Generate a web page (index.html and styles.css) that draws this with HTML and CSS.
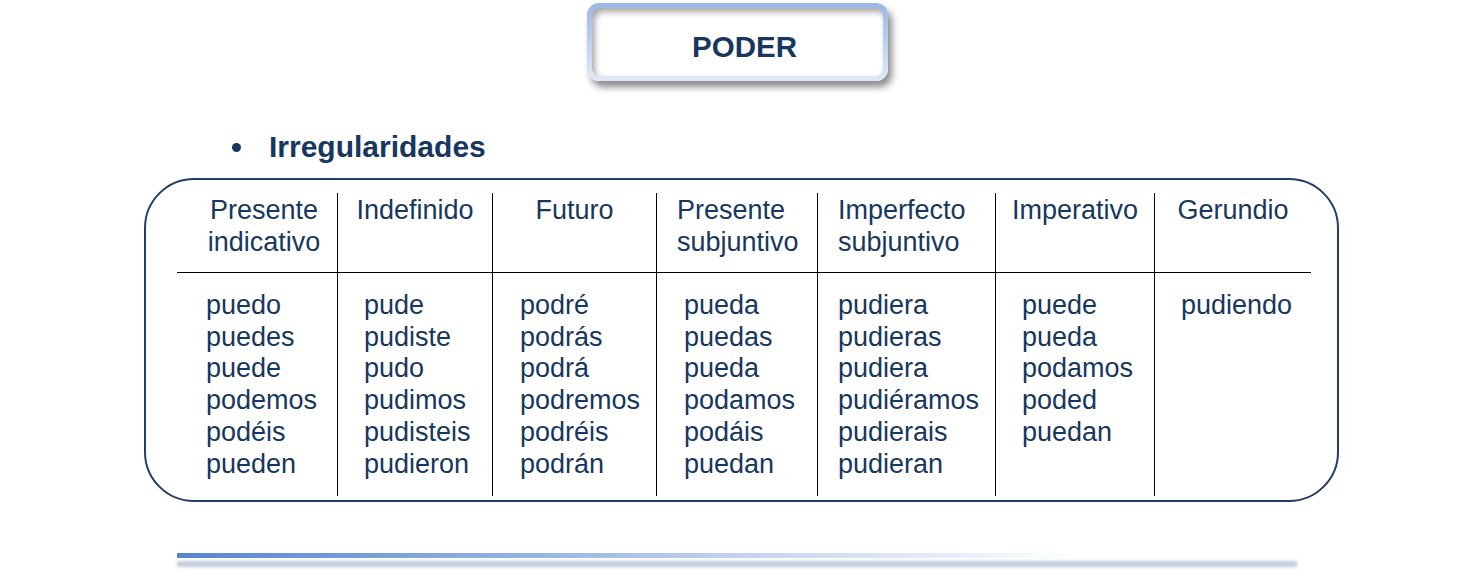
FILE: index.html
```html
<!DOCTYPE html>
<html lang="es">
<head>
<meta charset="utf-8">
<title>PODER</title>
<link rel="stylesheet" href="styles.css">
</head>
<body>
<div class="title-wrap">
  <div class="title-box">
    <div class="title-inner">PODER</div>
  </div>
</div>

<div class="heading">
  <span class="bullet"></span>
  <span class="heading-text">Irregularidades</span>
</div>

<div class="frame">
  <div class="table">
    <div class="col c1">
      <div class="head">Presente<br>indicativo</div>
      <div class="body">puedo<br>puedes<br>puede<br>podemos<br>podéis<br>pueden</div>
    </div>
    <div class="col c2">
      <div class="head">Indefinido</div>
      <div class="body">pude<br>pudiste<br>pudo<br>pudimos<br>pudisteis<br>pudieron</div>
    </div>
    <div class="col c3">
      <div class="head">Futuro</div>
      <div class="body">podré<br>podrás<br>podrá<br>podremos<br>podréis<br>podrán</div>
    </div>
    <div class="col c4">
      <div class="head">Presente<br>subjuntivo</div>
      <div class="body">pueda<br>puedas<br>pueda<br>podamos<br>podáis<br>puedan</div>
    </div>
    <div class="col c5">
      <div class="head">Imperfecto<br>subjuntivo</div>
      <div class="body">pudiera<br>pudieras<br>pudiera<br>pudiéramos<br>pudierais<br>pudieran</div>
    </div>
    <div class="col c6">
      <div class="head">Imperativo</div>
      <div class="body">puede<br>pueda<br>podamos<br>poded<br>puedan</div>
    </div>
    <div class="col c7">
      <div class="head">Gerundio</div>
      <div class="body">pudiendo</div>
    </div>
  </div>
</div>

<div class="footer">
  <div class="blue-line"></div>
  <div class="grey-line"></div>
</div>
</body>
</html>
```

FILE: styles.css
```css
html, body {
  margin: 0;
  padding: 0;
  background: #ffffff;
}

body {
  font-family: "Liberation Sans", Arial, sans-serif;
  color: #17375e;
  width: 1483px;
  height: 580px;
  overflow: hidden;
}

.title-wrap {
  padding-top: 3px;
  padding-left: 587px;
}

.title-box {
  width: 301px;
  height: 78px;
  box-sizing: border-box;
  padding: 5px;
  border-radius: 12px;
  background: linear-gradient(180deg, #9bb6e6 0%, #c3d3ef 55%, #e1e8f6 100%);
  box-shadow: 4px 6px 7px rgba(0, 0, 0, 0.45);
}

.title-inner {
  height: 100%;
  box-sizing: border-box;
  background: #ffffff;
  border-radius: 8px;
  box-shadow: inset 3px 4px 6px rgba(0, 0, 0, 0.35);
  font-weight: bold;
  font-size: 29.5px;
  line-height: 34px;
  text-align: center;
  padding-top: 22px;
  padding-left: 14px;
}

.heading {
  display: flex;
  align-items: center;
  margin-top: 48px;
  height: 36px;
  padding-left: 232px;
}

.bullet {
  width: 9px;
  height: 9px;
  border-radius: 50%;
  background: #17375e;
  margin-right: 28px;
}

.heading-text {
  font-weight: bold;
  font-size: 30px;
  line-height: 36px;
}

.frame {
  margin-top: 13px;
  margin-left: 144px;
  width: 1195px;
  height: 324px;
  box-sizing: border-box;
  border: 2px solid #243f63;
  border-radius: 50px;
  padding: 13px 0 0 31px;
}

.table {
  display: flex;
}

.col {
  box-sizing: border-box;
  font-size: 27px;
}

.col + .col {
  border-left: 1px solid #000000;
}

.c1 { width: 160px; }
.c2 { width: 155px; }
.c3 { width: 164px; }
.c4 { width: 161px; }
.c5 { width: 178px; }
.c6 { width: 159px; }
.c7 { width: 157px; }

.head {
  height: 80px;
  box-sizing: border-box;
  border-bottom: 1px solid #000000;
  padding-top: 1px;
  line-height: 32px;
  text-align: center;
}

.body {
  height: 223px;
  box-sizing: border-box;
  padding-top: 17px;
  line-height: 31.7px;
}

.c1 .head { padding-left: 14px; }
.c4 .head { text-align: left; padding-left: 20px; }
.c5 .head { text-align: left; padding-left: 20px; }

.c1 .body { padding-left: 29px; }
.c2 .body { padding-left: 26px; }
.c3 .body { padding-left: 27px; }
.c4 .body { padding-left: 27px; }
.c5 .body { padding-left: 20px; }
.c6 .body { padding-left: 26px; }
.c7 .body { padding-left: 26px; }

.footer {
  margin-top: 51px;
  padding-left: 177px;
}

.blue-line {
  width: 900px;
  height: 5px;
  background: linear-gradient(90deg, #5786cf 0%, #8eaee0 35%, #c7d5ef 65%, #e6ecf7 85%, #ffffff 100%);
}

.grey-line {
  margin-top: 3px;
  width: 1120px;
  height: 6px;
  background: #c3cddc;
  filter: blur(1.5px);
}
```
